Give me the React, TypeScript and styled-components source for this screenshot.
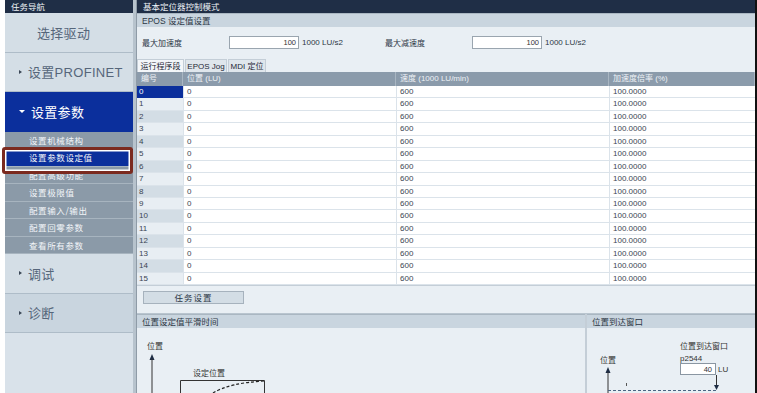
import React from "react";
import styled, { createGlobalStyle } from "styled-components";

const GlobalStyle = createGlobalStyle`
  html, body { margin: 0; padding: 0; background: #fff; }
  body { font-family: "Liberation Sans", "Noto Sans CJK SC", sans-serif; }
  * { box-sizing: border-box; }
`;

const navMain = [
  { label: "选择驱动", arrow: "" },
  { label: "设置PROFINET", arrow: "right" },
];
const subItems = [
  "设置机械结构",
  "设置参数设定值",
  "配置高级功能",
  "设置极限值",
  "配置输入/输出",
  "配置回零参数",
  "查看所有参数",
];
const rows = Array.from({ length: 16 }, (_, i) => i);

export default function App() {
  return (
    <>
      <GlobalStyle />
      <Root>
        <Nav>
          <DarkBar>任务导航</DarkBar>
          {navMain.map((item) => (
            <NavItem key={item.label} $indent={item.arrow ? 14 : 32}>
              {item.arrow && <Caret />}
              {item.label}
            </NavItem>
          ))}
          <NavItem $active $indent={14}>
            <Caret $down />
            设置参数
          </NavItem>
          <SubList>
            {subItems.map((s, i) => (
              <SubItem key={s} $active={i === 1}>
                {s}
              </SubItem>
            ))}
          </SubList>
          <NavItem $indent={14}>
            <Caret />
            调试
          </NavItem>
          <NavItem $indent={14} $shade>
            <Caret />
            诊断
          </NavItem>
          <NavRest />
          <Callout />
        </Nav>
        <Divider />
        <Main>
          <DarkBar>基本定位器控制模式</DarkBar>
          <SubHeader>EPOS 设定值设置</SubHeader>
          <ParamRow>
            <ParamLabel>最大加速度</ParamLabel>
            <NumInput>100</NumInput>
            <Unit $w={86}>1000 LU/s2</Unit>
            <ParamLabel>最大减速度</ParamLabel>
            <NumInput>100</NumInput>
            <Unit $w={60}>1000 LU/s2</Unit>
          </ParamRow>
          <Tabs>
            <Tab $active $w={47}>运行程序段</Tab>
            <Tab $w={42}>EPOS Jog</Tab>
            <Tab $w={38}>MDI 定位</Tab>
          </Tabs>
          <Table>
            <HeadRow>
              <HeadCell>编号</HeadCell>
              <HeadCell>位置 (LU)</HeadCell>
              <HeadCell>速度 (1000 LU/min)</HeadCell>
              <HeadCell>加速度倍率 (%)</HeadCell>
            </HeadRow>
            {rows.map((r) => (
              <BodyRow key={r}>
                <IdCell $odd={r % 2 === 1} $selected={r === 0}>
                  {r}
                </IdCell>
                <Cell>0</Cell>
                <Cell>600</Cell>
                <Cell>100.0000</Cell>
              </BodyRow>
            ))}
          </Table>
          <ButtonArea>
            <TaskButton>任务设置</TaskButton>
          </ButtonArea>
          <Panels>
            <Panel $grow>
              <SubHeader>位置设定值平滑时间</SubHeader>
              <PanelBody>
                <svg width="448" height="65" viewBox="0 0 448 65">
                  <text x="10" y="21" fontSize="8" fill="#333" fontFamily="Noto Sans CJK SC, sans-serif">
                    位置
                  </text>
                  <path d="M15 26 L12.5 32 H17.5 Z" fill="#1e2d44" />
                  <line x1="15" y1="31" x2="15" y2="65" stroke="#333" strokeWidth="1" />
                  <text x="56" y="48" fontSize="8" fill="#333" fontFamily="Noto Sans CJK SC, sans-serif">
                    设定位置
                  </text>
                  <path d="M43.5 65 V52.5 H127.5 V65" fill="none" stroke="#333" strokeWidth="1" />
                  <path
                    d="M76 65 Q92 55 127 53"
                    fill="none"
                    stroke="#222"
                    strokeWidth="1.2"
                    strokeDasharray="3 2"
                  />
                </svg>
              </PanelBody>
            </Panel>
            <Panel $w={168}>
              <SubHeader>位置到达窗口</SubHeader>
              <PanelBody>
                <svg width="168" height="65" viewBox="0 0 168 65">
                  <text x="93" y="21" fontSize="8" fill="#333" fontFamily="Noto Sans CJK SC, sans-serif">
                    位置到达窗口
                  </text>
                  <text x="93" y="33" fontSize="8" fill="#333" fontFamily="Liberation Sans, sans-serif">
                    p2544
                  </text>
                  <text x="13" y="35" fontSize="8" fill="#333" fontFamily="Noto Sans CJK SC, sans-serif">
                    位置
                  </text>
                  <rect x="93.5" y="35.5" width="35" height="11" fill="#fff" stroke="#8a96a2" />
                  <text x="125" y="44" fontSize="7.5" fill="#333" textAnchor="end" fontFamily="Liberation Sans, sans-serif">
                    40
                  </text>
                  <text x="131" y="44" fontSize="8" fill="#333" fontFamily="Liberation Sans, sans-serif">
                    LU
                  </text>
                  <path d="M21 39 L18.5 45 H23.5 Z" fill="#1e2d44" />
                  <line x1="21" y1="44" x2="21" y2="65" stroke="#333" />
                  <line x1="129.5" y1="47" x2="129.5" y2="60" stroke="#333" />
                  <path d="M129.5 62 L127 57 H132 Z" fill="#1e2d44" />
                  <line x1="39.5" y1="55" x2="39.5" y2="58" stroke="#555" />
                  <line
                    x1="21"
                    y1="62.5"
                    x2="131"
                    y2="62.5"
                    stroke="#4a6684"
                    strokeWidth="1.2"
                    strokeDasharray="3 2"
                  />
                </svg>
              </PanelBody>
            </Panel>
          </Panels>
        </Main>
      </Root>
    </>
  );
}

const Root = styled.div`
  display: flex;
  width: 757px;
  height: 393px;
  overflow: hidden;
  padding-left: 5px;
  border-right: 2px solid #111;
  background: #fff;
`;

const Nav = styled.div`
  position: relative;
  width: 129px;
  display: flex;
  flex-direction: column;
  background: #d4dee6;
`;

const DarkBar = styled.div`
  height: 13px;
  flex-shrink: 0;
  background: #1f2e46;
  color: #eef2f6;
  font-size: 8.5px;
  line-height: 13px;
  padding-left: 6px;
  font-family: "Noto Sans CJK SC", sans-serif;
`;

const NavItem = styled.div<{ $active?: boolean; $shade?: boolean; $indent: number }>`
  height: 39.5px;
  flex-shrink: 0;
  display: flex;
  align-items: center;
  gap: 6px;
  padding-left: ${(p) => p.$indent}px;
  font-size: 13px;
  letter-spacing: 0.3px;
  color: ${(p) => (p.$active ? "#ffffff" : "#56667a")};
  background: ${(p) => (p.$active ? "#0b2f9c" : p.$shade ? "#c9d5df" : "#d4dee6")};
  border-bottom: 1px solid ${(p) => (p.$active ? "#0b2f9c" : "#aebcc8")};
`;

const Caret = styled.span<{ $down?: boolean }>`
  width: 0;
  height: 0;
  border-style: solid;
  ${(p) =>
    p.$down
      ? `border-width: 3px 3px 0 3px; border-color: #fff transparent transparent transparent;`
      : `border-width: 2.5px 0 2.5px 3px; border-color: transparent transparent transparent #3a4656;`}
`;

const SubList = styled.div`
  display: flex;
  flex-direction: column;
  background: #8b9aa8;
`;

const SubItem = styled.div<{ $active?: boolean }>`
  height: 17.5px;
  display: flex;
  align-items: center;
  padding-left: 24px;
  font-size: 8.5px;
  letter-spacing: 0.6px;
  color: #f2f5f8;
  font-family: "Noto Sans CJK SC", sans-serif;
  background: ${(p) => (p.$active ? "#0b2f9c" : "#8b9aa8")};
  border-bottom: 1px solid #a7b4bf;
`;

const NavRest = styled.div`
  flex: 1;
  background: #d9e2ea;
`;

const Callout = styled.div`
  position: absolute;
  left: -3px;
  top: 147px;
  width: 131px;
  height: 27px;
  border: 3px solid #7b2a1f;
  border-radius: 3px;
  box-shadow: inset 0 0 0 1.5px #ffffff;
`;

const Divider = styled.div`
  width: 3px;
  background: #b7c3cd;
`;

const Main = styled.div`
  flex: 1;
  display: flex;
  flex-direction: column;
  background: #e9eff4;
  border-left: 1px solid #8e9ba7;
`;

const SubHeader = styled.div`
  height: 14px;
  flex-shrink: 0;
  background: #c9d5df;
  color: #2c3745;
  font-size: 8.5px;
  line-height: 14px;
  padding-left: 5px;
  border-top: 1px solid #aab7c2;
  font-family: "Liberation Sans", "Noto Sans CJK SC", sans-serif;
`;

const ParamRow = styled.div`
  height: 31px;
  display: flex;
  align-items: center;
  padding-left: 5px;
  font-size: 8px;
  color: #2c3745;
`;

const ParamLabel = styled.span`
  width: 87px;
  font-family: "Noto Sans CJK SC", sans-serif;
`;

const NumInput = styled.div`
  width: 70px;
  height: 13px;
  background: #fff;
  border: 1px solid #9aa5af;
  text-align: right;
  padding-right: 2px;
  font-size: 7.5px;
  line-height: 11px;
  color: #333;
`;

const Unit = styled.span<{ $w: number }>`
  width: ${(p) => p.$w}px;
  padding-left: 3px;
`;

const Tabs = styled.div`
  height: 14px;
  display: flex;
  align-items: flex-end;
  gap: 1px;
`;

const Tab = styled.div<{ $active?: boolean; $w: number }>`
  width: ${(p) => p.$w}px;
  height: 13px;
  font-size: 8px;
  line-height: 13px;
  text-align: center;
  color: #1e2836;
  background: ${(p) => (p.$active ? "#f3f6f9" : "#dfe6ec")};
  border: 1px solid #c4ced7;
  border-bottom: none;
  white-space: nowrap;
`;

const Table = styled.div`
  display: flex;
  flex-direction: column;
  background: #fff;
`;

const HeadRow = styled.div`
  height: 14px;
  display: grid;
  grid-template-columns: 46px 213px 213px 1fr;
  background: #8b9bab;
`;

const HeadCell = styled.div`
  font-size: 8px;
  line-height: 14px;
  padding-left: 4px;
  color: #eef2f6;
  border-right: 1px solid #a9b6c2;
  white-space: nowrap;
`;

const BodyRow = styled.div`
  height: 12.44px;
  display: grid;
  grid-template-columns: 46px 213px 213px 1fr;
  border-bottom: 1px solid #dbe3ea;
`;

const IdCell = styled.div<{ $odd: boolean; $selected: boolean }>`
  font-size: 8px;
  line-height: 11.5px;
  padding-left: 2px;
  color: ${(p) => (p.$selected ? "#fff" : "#3a4452")};
  background: ${(p) => (p.$selected ? "#0b2f9c" : p.$odd ? "#e8eef3" : "#d3dde5")};
`;

const Cell = styled.div`
  font-size: 8px;
  line-height: 11.5px;
  padding-left: 3px;
  color: #3a4452;
  border-left: 1px solid #dbe3ea;
`;

const ButtonArea = styled.div`
  height: 28px;
  padding: 5px 0 0 6px;
  border-top: 1px solid #c4ced7;
`;

const TaskButton = styled.div`
  width: 101px;
  height: 13px;
  background: #d3dde5;
  border: 1px solid #a6b2bd;
  color: #2c3745;
  font-size: 8.5px;
  line-height: 11px;
  text-align: center;
  letter-spacing: 1px;
  font-family: "Noto Sans CJK SC", sans-serif;
`;

const Panels = styled.div`
  flex: 1;
  display: flex;
  gap: 2px;
  border-top: 1px solid #b9c5cf;
  background: #c4ced7;
`;

const Panel = styled.div<{ $grow?: boolean; $w?: number }>`
  ${(p) => (p.$grow ? "flex: 1;" : `width: ${p.$w}px;`)}
  display: flex;
  flex-direction: column;
  background: #e9eff4;
`;

const PanelBody = styled.div`
  flex: 1;
  overflow: hidden;
  svg {
    display: block;
  }
`;
